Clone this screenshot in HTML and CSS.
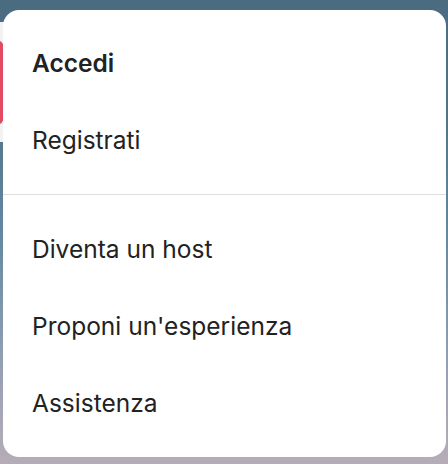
FILE: index.html
```html
<!DOCTYPE html>
<html lang="it">
<head>
<meta charset="utf-8">
<title>Menu</title>
<link rel="stylesheet" href="styles.css">
</head>
<body>
<div class="backdrop">
  <div class="bg-pill"></div>
  <div class="bg-red"></div>
</div>
<nav class="menu">
  <ul class="section">
    <li class="item item-strong">Accedi</li>
    <li class="item">Registrati</li>
  </ul>
  <hr class="divider">
  <ul class="section section-bottom">
    <li class="item">Diventa un host</li>
    <li class="item">Proponi un'esperienza</li>
    <li class="item">Assistenza</li>
  </ul>
</nav>
</body>
</html>
```
FILE: styles.css
```css
html, body {
  margin: 0;
  padding: 0;
}

body {
  width: 448px;
  height: 464px;
  overflow: hidden;
  position: relative;
  background: linear-gradient(180deg, #4b6b81 0%, #52748b 25%, #6488a0 50%, #8d9db1 75%, #aca8b8 92%, #b5adb6 100%);
  font-family: "Inter", "Liberation Sans", sans-serif;
}

.backdrop {
  position: absolute;
  inset: 0;
  z-index: 0;
}

.bg-pill {
  position: absolute;
  left: -40px;
  top: 22px;
  width: 60px;
  height: 120px;
  background: #f2f2f2;
  border-radius: 12px;
}

.bg-red {
  position: absolute;
  left: -40px;
  top: 40px;
  width: 44px;
  height: 85px;
  background: #e04a62;
  border-radius: 8px;
}

.menu {
  position: relative;
  z-index: 1;
  box-sizing: border-box;
  margin: 10px 0 0 3px;
  width: 443px;
  height: 447px;
  background: #ffffff;
  border-radius: 16px;
  overflow: hidden;
}

.section {
  list-style: none;
  margin: 0;
  padding: 15px 0 15px 0;
}

.section-bottom {
  padding: 16px 0 15px 0;
}

.item {
  height: 77px;
  line-height: 77px;
  padding-left: 29px;
  font-size: 24.5px;
  color: #222222;
  font-weight: 400;
  white-space: nowrap;
}

.item-strong {
  font-weight: 600;
}

.divider {
  margin: 0;
  border: 0;
  height: 1px;
  background: #dddddd;
}
```
